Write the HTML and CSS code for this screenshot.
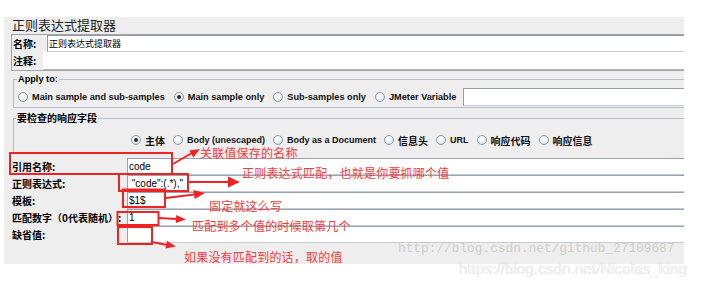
FILE: index.html
```html
<!DOCTYPE html>
<html lang="zh">
<head>
<meta charset="utf-8">
<title>正则表达式提取器</title>
<link rel="stylesheet" href="styles.css">
</head>
<body>
<div class="page">
  <div class="panel">
    <div class="title">正则表达式提取器</div>
    <div class="namebox">
      <div class="nrow"><span class="lbl nlbl">名称:</span><div class="field nfield">正则表达式提取器</div></div>
      <div class="nrow second"><span class="lbl clbl">注释:</span><div class="field cfield"></div></div>
    </div>
    <fieldset class="group apply">
      <legend>Apply to:</legend>
      <div class="radios">
        <span class="opt"><span class="radio"></span>Main sample and sub-samples</span>
        <span class="opt"><span class="radio on"></span>Main sample only</span>
        <span class="opt"><span class="radio"></span>Sub-samples only</span>
        <span class="opt"><span class="radio"></span>JMeter Variable</span>
        <div class="field varfield"></div>
      </div>
    </fieldset>
    <fieldset class="group check">
      <legend>要检查的响应字段</legend>
      <div class="radios fields">
        <span class="opt cjk"><span class="radio on"></span>主体</span>
        <span class="opt"><span class="radio"></span>Body (unescaped)</span>
        <span class="opt"><span class="radio"></span>Body as a Document</span>
        <span class="opt cjk"><span class="radio"></span>信息头</span>
        <span class="opt"><span class="radio"></span>URL</span>
        <span class="opt cjk"><span class="radio"></span>响应代码</span>
        <span class="opt cjk"><span class="radio"></span>响应信息</span>
      </div>
    </fieldset>
    <div class="form">
      <div class="frow"><span class="flbl">引用名称:</span><div class="finput">code</div></div>
      <div class="frow"><span class="flbl">正则表达式:</span><div class="finput"> "code":(.*),"</div></div>
      <div class="frow"><span class="flbl">模板:</span><div class="finput">$1$</div></div>
      <div class="frow"><span class="flbl">匹配数字（0代表随机）:</span><div class="finput">1</div></div>
      <div class="frow"><span class="flbl">缺省值:</span><div class="finput"></div></div>
    </div>
  </div>

  <svg class="marks" width="705" height="287" viewBox="0 0 705 287" aria-hidden="true">
    <g fill="none" stroke="#ee2424" stroke-width="2">
      <rect x="10" y="153" width="162" height="21"/>
      <rect x="119" y="174" width="69" height="17"/>
      <rect x="123" y="189.5" width="42" height="17.5"/>
      <rect x="117.5" y="212" width="41" height="13"/>
      <rect x="118" y="227" width="34" height="17"/>
      <line x1="173" y1="164" x2="192" y2="153"/>
      <line x1="189" y1="182" x2="229" y2="182"/>
      <line x1="166" y1="198" x2="196" y2="194.2"/>
      <line x1="159" y1="218" x2="177" y2="219"/>
      <line x1="152" y1="242" x2="167" y2="245"/>
    </g>
    <g fill="#ee2424">
      <polygon points="200,149 193.3,157.5 189.3,150.5"/>
      <polygon points="240,182 228,176.5 228,187.5"/>
      <polygon points="205,193 194.7,198.9 193.5,189.9"/>
      <polygon points="186,219.5 175.8,222.9 176.2,214.9"/>
      <polygon points="176,246.5 165.4,248.5 167,240.7"/>
    </g>
  </svg>
  <span class="note n1">关联值保存的名称</span>
  <span class="note n2">正则表达式匹配，也就是你要抓哪个值</span>
  <span class="note n3">固定就这么写</span>
  <span class="note n4">匹配到多个值的时候取第几个</span>
  <span class="note n5">如果没有匹配到的话，取的值</span>
  <span class="wm wm1">http://blog.csdn.net/github_27109687</span>
  <span class="wm wm2">https://blog.csdn.net/Nicolas_king</span>
</div>
</body>
</html>
```

FILE: styles.css
```css
* { box-sizing: border-box; }
html, body { margin: 0; padding: 0; background: #fff; }
body {
  font-family: "Liberation Sans", "Noto Sans CJK SC", sans-serif;
  color: #000;
  width: 705px;
  height: 287px;
  overflow: hidden;
}
.page {
  position: relative;
  width: 705px;
  height: 287px;
  padding: 17px 0 0 4px;
}
.panel {
  width: 680px;
  height: 247px;
  background: #eeeeee;
  display: flex;
  flex-direction: column;
}
.title {
  flex: none;
  height: 16px;
  padding-left: 8px;
  font-family: "Noto Sans CJK SC", sans-serif;
  font-size: 13px;
  line-height: 16px;
  color: #222;
}
.namebox {
  margin: 1px 0 0 7px;
  border: 1px solid #a4a4a4;
  border-right: 0;
  display: flex;
  flex-direction: column;
}
.nrow { display: flex; height: 17px; }
.nrow.second { height: 18px; }
.lbl {
  font-family: "Noto Sans CJK SC", sans-serif;
  font-weight: 700;
  font-size: 10px;
  line-height: 17px;
  padding-left: 1px;
  white-space: nowrap;
}
.nlbl { width: 35px; }
.clbl { width: 31px; }
.field {
  flex: 1;
  background: #fff;
  border: 1px solid #8f9cab;
  border-right: 0;
  border-bottom-color: #c9d0d7;
}
.nfield {
  font-family: "Noto Sans CJK SC", sans-serif;
  font-size: 9px;
  line-height: 15px;
  padding-left: 1px;
}
.cfield { border: 0; border-bottom: 1px solid #b8b8b8; }

.group {
  margin: 0 0 0 9px;
  padding: 0 0 0 4px;
  border: 1px solid #b3bfcb;
  border-right: 0;
  min-width: 0;
}
.group legend {
  padding: 0 1px;
  margin-left: -1px;
  font-size: 9.2px;
  font-weight: 700;
  line-height: 12px;
}
.apply { margin-top: 2px; padding-top: 3px; padding-bottom: 1px; }
.check { margin-top: 4px; padding-top: 9px; padding-bottom: 5px; border-bottom: 0; }
.check legend {
  font-family: "Noto Sans CJK SC", sans-serif;
  font-size: 10px;
  margin-left: -2px;
}
.radios { display: flex; align-items: center; height: 18px; }
.radios.fields { height: 14px; margin-left: 113px; }
.opt {
  display: flex;
  align-items: center;
  margin-right: 9px;
  font-size: 9.2px;
  font-weight: 700;
  white-space: nowrap;
  color: #111;
}
.fields .opt { margin-right: 8px; }
.fields .opt:not(.cjk) { font-size: 9px; }
.opt.cjk { font-family: "Noto Sans CJK SC", sans-serif; font-size: 10px; }
.radio {
  position: relative;
  width: 10px;
  height: 10px;
  margin-right: 4px;
  border-radius: 50%;
  border: 1px solid #8a99aa;
  background: radial-gradient(circle at 40% 35%, #ffffff 0%, #eef2f6 45%, #c9d3de 100%);
  flex: none;
}
.radio.on::after {
  content: "";
  position: absolute;
  left: 2px;
  top: 2px;
  width: 4px;
  height: 4px;
  border-radius: 50%;
  background: #2a2a2a;
}
.varfield { height: 18px; margin-left: -2px; }

.form {
  margin-top: 6px;
  padding-left: 8px;
  display: flex;
  flex-direction: column;
}
.frow { display: flex; height: 17px; }
.flbl {
  width: 115px;
  font-family: "Noto Sans CJK SC", sans-serif;
  font-weight: 700;
  font-size: 10px;
  line-height: 17px;
  white-space: nowrap;
}
.finput {
  flex: 1;
  background: #fff;
  border: 1px solid #97a3b0;
  border-right: 0;
  border-bottom-color: #c4ccd4;
  font-size: 10px;
  line-height: 15px;
  padding-left: 1px;
  white-space: pre;
}

.marks { position: absolute; left: 0; top: 0; pointer-events: none; }
.note {
  position: absolute;
  font-family: "Noto Sans CJK SC", sans-serif;
  font-size: 12px;
  line-height: 14px;
  color: #f53a3a;
  white-space: nowrap;
  letter-spacing: 0.2px;
}
.n1 { left: 200px; top: 146px; }
.n2 { left: 242px; top: 166px; }
.n3 { left: 209px; top: 199px; }
.n4 { left: 192px; top: 219px; }
.n5 { left: 184px; top: 250px; }
.wm { position: absolute; white-space: nowrap; }
.wm1 {
  left: 398px;
  top: 242px;
  font-family: "Liberation Mono", monospace;
  font-size: 12.8px;
  line-height: 14px;
  color: #cfcfcb;
}
.wm2 {
  left: 459px;
  top: 261px;
  font-family: "Liberation Sans", sans-serif;
  font-size: 15.3px;
  line-height: 16px;
  color: #f3f3f3;
  text-shadow: 0 0 1px rgba(0, 0, 0, 0.18);
}
```
